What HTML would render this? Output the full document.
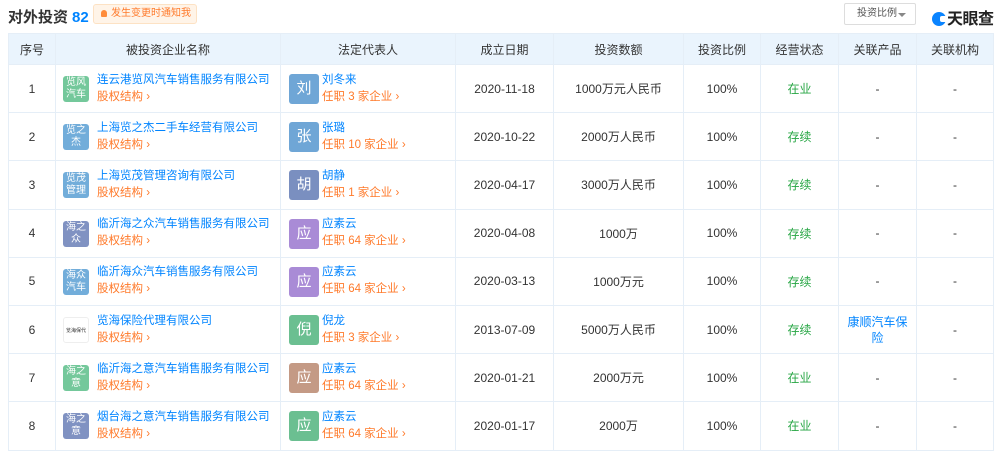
<!DOCTYPE html>
<html><head><meta charset="utf-8"><style>
*{margin:0;padding:0;box-sizing:border-box}
body{width:1000px;height:453px;overflow:hidden;background:#fff;font-family:"Liberation Sans","Noto Sans CJK SC",sans-serif;color:#333;position:relative}
.title{position:absolute;left:8px;top:6px;font-size:15px;font-weight:bold;color:#333}
.title b{color:#0084ff;margin-left:4px}
.notify{position:absolute;left:93px;top:4px;width:104px;height:20px;background:#fff4e8;border:1px solid #fde2c4;border-radius:3px;font-size:10px;color:#ff7a2b;line-height:18px;padding-left:17px;white-space:nowrap;overflow:hidden}
.notify:before{content:"";position:absolute;left:7px;top:5px;width:6px;height:7px;background:#ff8c3a;border-radius:3px 3px 1px 1px}
.sel{position:absolute;left:844px;top:3px;width:72px;height:22px;border:1px solid #ddd;border-radius:2px;font-size:10px;color:#555;line-height:20px;padding-left:12px;white-space:nowrap}
.sel:after{content:"";position:absolute;right:9px;top:9px;border:4px solid transparent;border-top:4px solid #888}
.logo{position:absolute;left:932px;top:5px;font-size:16px;font-weight:bold;color:#222;letter-spacing:-0.5px}
.logo i{display:inline-block;width:14px;height:14px;border-radius:50%;background:#0a84ff;vertical-align:-2px;margin-right:1px;position:relative}
.logo i:after{content:"";position:absolute;right:-1px;top:4px;width:7px;height:6px;background:#fff;border-radius:2px}
table{position:absolute;left:8px;top:33px;width:985px;border-collapse:collapse;table-layout:fixed}
td,th{border:1px solid #e5eef7;font-size:12px;text-align:center;font-weight:normal}
th{background:#eaf4fd;height:31px;color:#333}
td{height:48.2px;color:#333}
.nm,.cn{text-align:left;position:relative;padding-left:41px;white-space:nowrap}
.bx{position:absolute;left:7px;top:11px;width:26px;height:26px;border-radius:3px;color:#fff;font-size:10px;line-height:12px;text-align:center;padding-top:1px;opacity:.85}
.av{position:absolute;left:8px;top:9px;width:30px;height:30px;border-radius:3px;color:#fff;font-size:15px;line-height:30px;text-align:center}
.n1{color:#0084ff;font-size:11.5px;line-height:17px}
.n2{color:#ff7a2b;font-size:11.5px;line-height:17px}
.g{color:#27a644}
.bl{color:#0084ff}
</style></head><body>
<div class="title">对外投资<b>82</b></div>
<div class="notify">发生变更时通知我</div>
<div class="sel">投资比例</div>
<div class="logo"><i></i>天眼查</div>
<table>
<colgroup><col style="width:47px"><col style="width:225px"><col style="width:175px"><col style="width:98px"><col style="width:130px"><col style="width:77px"><col style="width:78px"><col style="width:78px"><col style="width:77px"></colgroup>
<tr><th>序号</th><th>被投资企业名称</th><th>法定代表人</th><th>成立日期</th><th>投资数额</th><th>投资比例</th><th>经营状态</th><th>关联产品</th><th>关联机构</th></tr>
<tr><td>1</td><td class="nm"><div class="bx" style="background:#5cbf8a">览风<br>汽车</div><div class="n1">连云港览风汽车销售服务有限公司</div><div class="n2">股权结构 ›</div></td><td class="cn"><div class="av" style="background:#6fa6d6">刘</div><div class="n1">刘冬来</div><div class="n2">任职 3 家企业 ›</div></td><td>2020-11-18</td><td>1000万元人民币</td><td>100%</td><td class="g">在业</td><td>-</td><td>-</td></tr>
<tr><td>2</td><td class="nm"><div class="bx" style="background:#5a9fd4">览之<br>杰</div><div class="n1">上海览之杰二手车经营有限公司</div><div class="n2">股权结构 ›</div></td><td class="cn"><div class="av" style="background:#6fa6d6">张</div><div class="n1">张璐</div><div class="n2">任职 10 家企业 ›</div></td><td>2020-10-22</td><td>2000万人民币</td><td>100%</td><td class="g">存续</td><td>-</td><td>-</td></tr>
<tr><td>3</td><td class="nm"><div class="bx" style="background:#5a9fd4">览茂<br>管理</div><div class="n1">上海览茂管理咨询有限公司</div><div class="n2">股权结构 ›</div></td><td class="cn"><div class="av" style="background:#7a8fc0">胡</div><div class="n1">胡静</div><div class="n2">任职 1 家企业 ›</div></td><td>2020-04-17</td><td>3000万人民币</td><td>100%</td><td class="g">存续</td><td>-</td><td>-</td></tr>
<tr><td>4</td><td class="nm"><div class="bx" style="background:#6b80b8">海之<br>众</div><div class="n1">临沂海之众汽车销售服务有限公司</div><div class="n2">股权结构 ›</div></td><td class="cn"><div class="av" style="background:#a98bd6">应</div><div class="n1">应素云</div><div class="n2">任职 64 家企业 ›</div></td><td>2020-04-08</td><td>1000万</td><td>100%</td><td class="g">存续</td><td>-</td><td>-</td></tr>
<tr><td>5</td><td class="nm"><div class="bx" style="background:#5a9fd4">海众<br>汽车</div><div class="n1">临沂海众汽车销售服务有限公司</div><div class="n2">股权结构 ›</div></td><td class="cn"><div class="av" style="background:#a98bd6">应</div><div class="n1">应素云</div><div class="n2">任职 64 家企业 ›</div></td><td>2020-03-13</td><td>1000万元</td><td>100%</td><td class="g">存续</td><td>-</td><td>-</td></tr>
<tr><td>6</td><td class="nm"><div class="bx" style="background:#fff;border:1px solid #eee;color:#333;font-size:5px;line-height:24px;opacity:1">览海保代</div><div class="n1">览海保险代理有限公司</div><div class="n2">股权结构 ›</div></td><td class="cn"><div class="av" style="background:#6bbf91">倪</div><div class="n1">倪龙</div><div class="n2">任职 3 家企业 ›</div></td><td>2013-07-09</td><td>5000万人民币</td><td>100%</td><td class="g">存续</td><td class="bl" style="line-height:16px">康顺汽车保<br>险</td><td>-</td></tr>
<tr><td>7</td><td class="nm"><div class="bx" style="background:#5cbf8a">海之<br>意</div><div class="n1">临沂海之意汽车销售服务有限公司</div><div class="n2">股权结构 ›</div></td><td class="cn"><div class="av" style="background:#c49a85">应</div><div class="n1">应素云</div><div class="n2">任职 64 家企业 ›</div></td><td>2020-01-21</td><td>2000万元</td><td>100%</td><td class="g">在业</td><td>-</td><td>-</td></tr>
<tr><td>8</td><td class="nm"><div class="bx" style="background:#6b80b8">海之<br>意</div><div class="n1">烟台海之意汽车销售服务有限公司</div><div class="n2">股权结构 ›</div></td><td class="cn"><div class="av" style="background:#6bbf91">应</div><div class="n1">应素云</div><div class="n2">任职 64 家企业 ›</div></td><td>2020-01-17</td><td>2000万</td><td>100%</td><td class="g">在业</td><td>-</td><td>-</td></tr>
</table>
</body></html>
